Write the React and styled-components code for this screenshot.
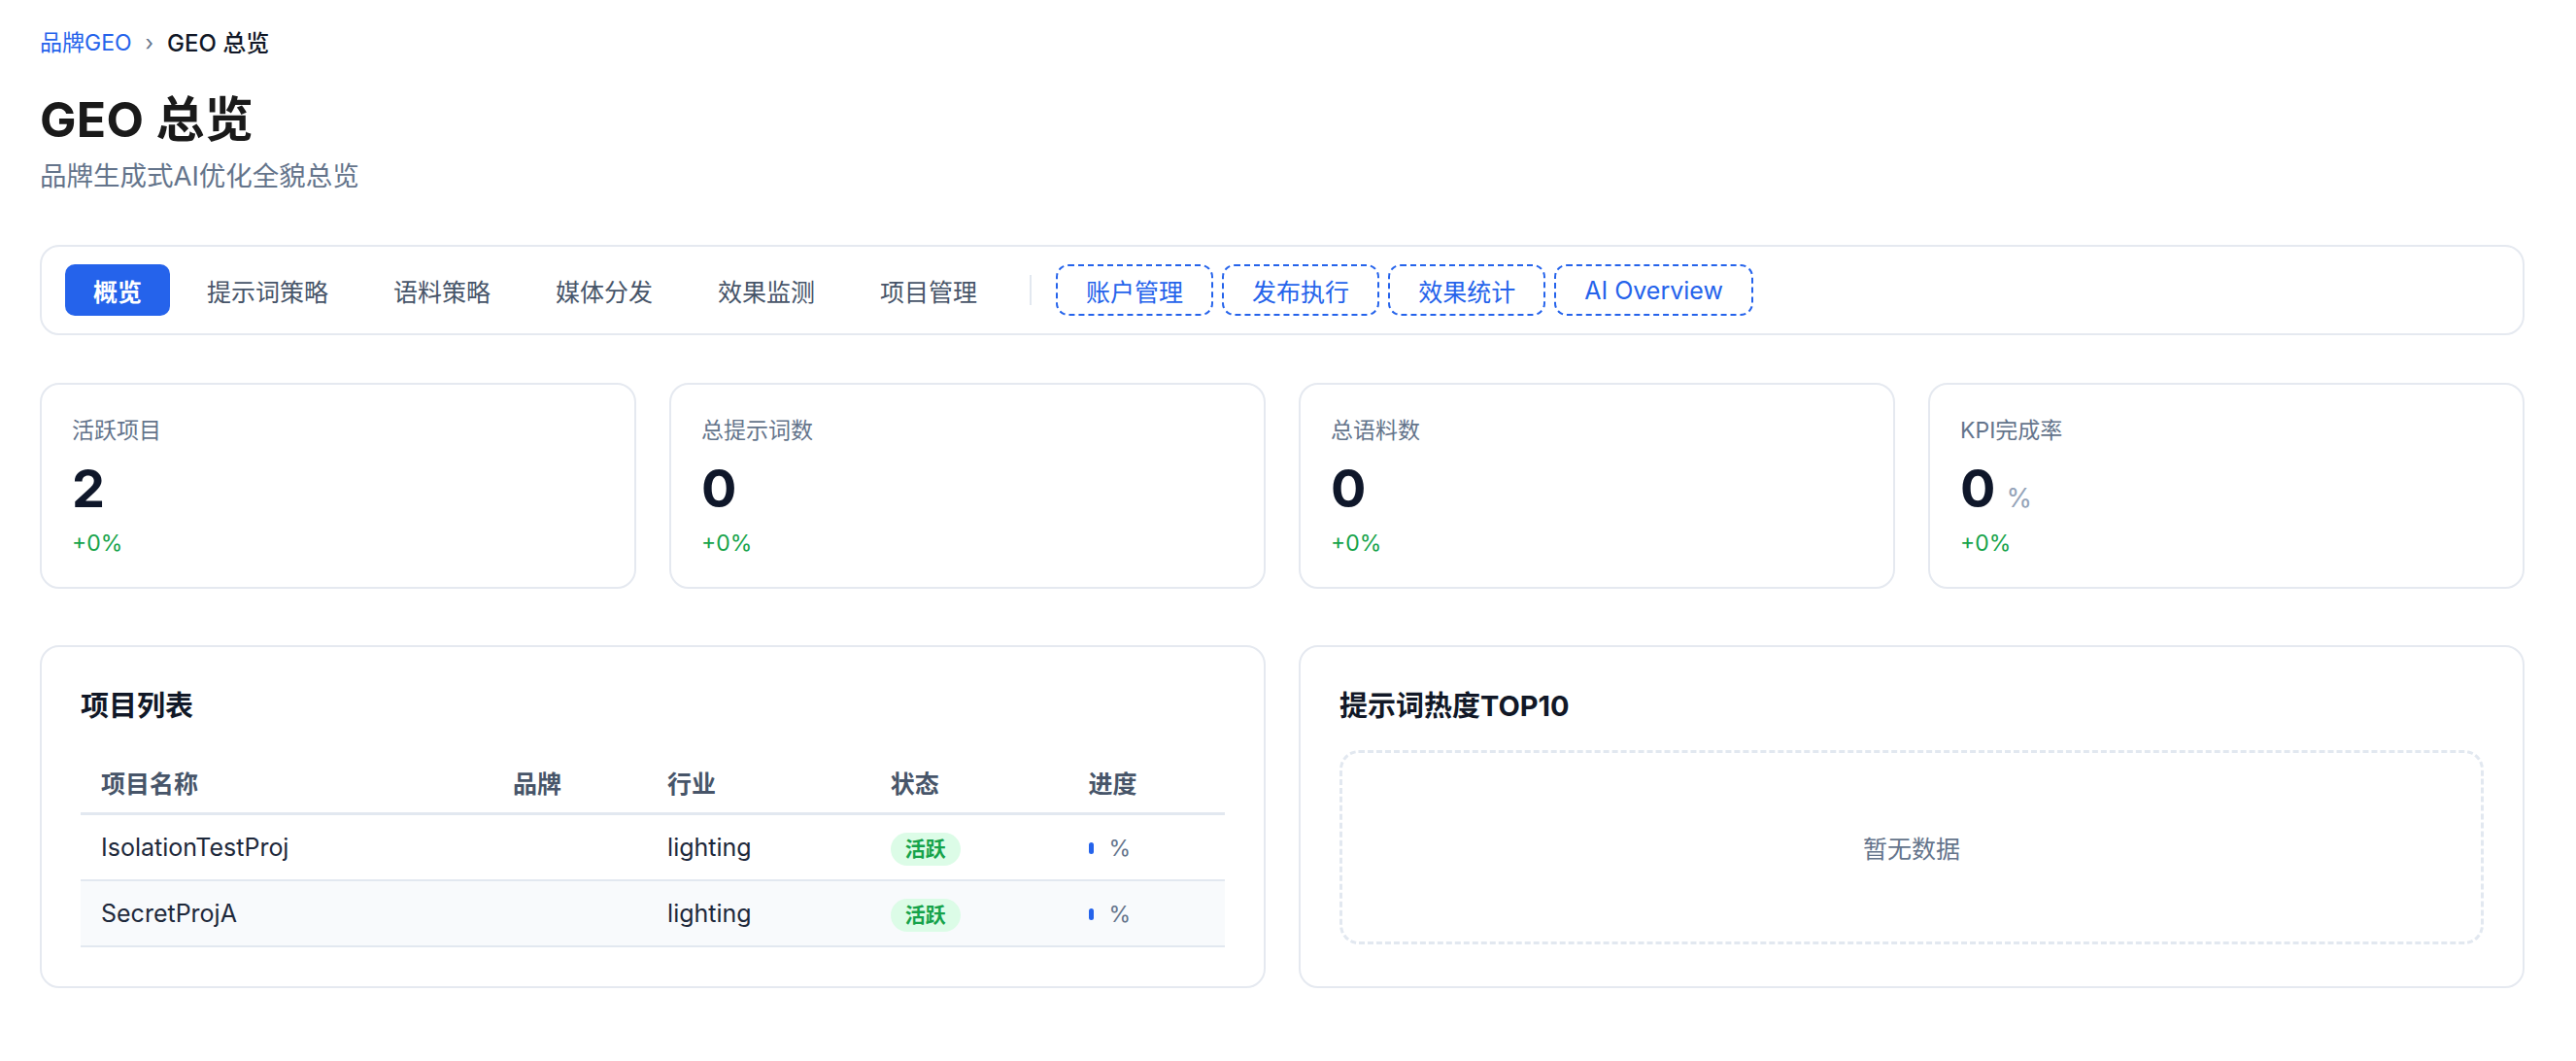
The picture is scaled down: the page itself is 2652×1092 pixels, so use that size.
import React from "react";
import styled, { createGlobalStyle } from "styled-components";

const GlobalStyle = createGlobalStyle`
  body {
    margin: 0;
    background: #ffffff;
    font-family: Inter, "Noto Sans CJK SC", sans-serif;
    color: #1e293b;
  }
`;

const Page = styled.div`
  padding: 27px 53px 60px 41px;
`;

const Breadcrumb = styled.div`
  display: flex;
  align-items: center;
  font-size: 23px;
  line-height: 35px;
`;

const Crumb = styled.span`
  color: ${(p) => (p.link ? "#2563eb" : "#111827")};
  font-weight: ${(p) => (p.link ? 400 : 500)};
  font-size: ${(p) => (p.link ? 23 : 24)}px;
`;

const CrumbSep = styled.span`
  color: #64748b;
  margin: 0 14px;
  font-size: 22px;
`;

const Title = styled.h1`
  margin: 30px 0 0;
  font-size: 50px;
  line-height: 62px;
  letter-spacing: 0.3px;
  font-weight: 700;
  color: #1a1a1a;
`;

const Subtitle = styled.p`
  margin: 7px 0 0;
  font-size: 27.5px;
  line-height: 40px;
  color: #64748b;
`;

const TabBar = styled.nav`
  margin-top: 51px;
  display: flex;
  align-items: center;
  gap: 9px;
  padding: 18px 24px;
  border: 2px solid #e5e9f0;
  border-radius: 20px;
`;

const Tab = styled.button`
  height: 53px;
  padding: 0 29px;
  box-sizing: border-box;
  border-radius: ${(p) => (p.dashed ? 13 : 10)}px;
  border: ${(p) => (p.dashed ? "2px dashed #2563eb" : "none")};
  background: ${(p) => (p.active ? "#2563eb" : "transparent")};
  color: ${(p) => (p.active ? "#ffffff" : p.dashed ? "#2563eb" : "#475569")};
  font-family: inherit;
  font-size: 25px;
  font-weight: ${(p) => (p.active ? 600 : 400)};
  cursor: pointer;
`;

const TabDivider = styled.span`
  width: 2px;
  height: 31px;
  background: #e2e8f0;
  margin: 0 16px;
`;

const StatGrid = styled.section`
  margin-top: 49px;
  display: grid;
  grid-template-columns: repeat(4, minmax(0, 1fr));
  gap: 34px;
`;

const Card = styled.div`
  border: 2px solid #e5e9f0;
  border-radius: 20px;
  background: #ffffff;
  box-sizing: border-box;
`;

const StatCard = styled(Card)`
  padding: 30px 31px 28px;
`;

const StatLabel = styled.div`
  font-size: 23px;
  line-height: 34px;
  color: #64748b;
`;

const StatValue = styled.div`
  margin-top: 10px;
  display: flex;
  align-items: baseline;
  gap: 11px;
  height: 65px;
  font-size: 54px;
  line-height: 65px;
  font-weight: 700;
  color: #0f172a;
`;

const StatUnit = styled.span`
  font-size: 27px;
  line-height: 1;
  font-weight: 400;
  color: #94a3b8;
`;

const StatDelta = styled.div`
  margin-top: 7px;
  font-size: 23px;
  line-height: 34px;
  color: #16a34a;
`;

const PanelGrid = styled.section`
  margin-top: 58px;
  display: grid;
  grid-template-columns: repeat(2, minmax(0, 1fr));
  gap: 34px;
`;

const Panel = styled(Card)`
  padding: 39px 40px 40px;
`;

const PanelTitle = styled.h2`
  margin: 0 0 24px;
  font-size: 29px;
  line-height: 43px;
  font-weight: 700;
  color: #111827;
`;

const Table = styled.table`
  width: 100%;
  border-collapse: collapse;
  table-layout: fixed;
  font-size: 25px;
`;

const Th = styled.th`
  text-align: left;
  padding: 17px 21px 11px;
  line-height: 36px;
  font-weight: 600;
  color: #475569;
  border-bottom: 3px solid #e2e8f0;
`;

const Row = styled.tr`
  background: ${(p) => (p.striped ? "#f8fafc" : "#ffffff")};
`;

const Td = styled.td`
  height: 66px;
  padding: 0 21px;
  vertical-align: middle;
  line-height: 36px;
  color: #1e293b;
  border-bottom: 2px solid #e2e8f0;
  white-space: nowrap;
`;

const Badge = styled.span`
  display: inline-flex;
  align-items: center;
  height: 34px;
  padding: 0 15px;
  border-radius: 17px;
  background: #dcfce7;
  color: #16a34a;
  font-size: 21px;
  font-weight: 600;
  vertical-align: middle;
`;

const Progress = styled.span`
  display: inline-flex;
  align-items: center;
  gap: 16px;
  color: #64748b;
  font-size: 23px;
  vertical-align: middle;
`;

const ProgressBar = styled.span`
  display: inline-block;
  width: 5px;
  height: 12px;
  border-radius: 3px;
  background: #2563eb;
`;

const Empty = styled.div`
  height: 200px;
  display: flex;
  align-items: center;
  justify-content: center;
  border: 3px dashed #e2e8f0;
  border-radius: 20px;
  box-sizing: border-box;
  color: #64748b;
  font-size: 25px;
`;

const tabs = ["概览", "提示词策略", "语料策略", "媒体分发", "效果监测", "项目管理"];
const extraTabs = ["账户管理", "发布执行", "效果统计", "AI Overview"];

const stats = [
  { label: "活跃项目", value: "2" },
  { label: "总提示词数", value: "0" },
  { label: "总语料数", value: "0" },
  { label: "KPI完成率", value: "0", unit: "%" },
];

const projects = [
  { name: "IsolationTestProj", brand: "", industry: "lighting", status: "活跃" },
  { name: "SecretProjA", brand: "", industry: "lighting", status: "活跃" },
];

const colWidths = ["36%", "13.5%", "19.5%", "17.3%", "13.7%"];

export default function App() {
  return (
    <Page>
      <GlobalStyle />
      <Breadcrumb>
        <Crumb link>品牌GEO</Crumb>
        <CrumbSep>›</CrumbSep>
        <Crumb>GEO 总览</Crumb>
      </Breadcrumb>
      <Title>GEO 总览</Title>
      <Subtitle>品牌生成式AI优化全貌总览</Subtitle>

      <TabBar>
        {tabs.map((t, i) => (
          <Tab key={t} active={i === 0}>
            {t}
          </Tab>
        ))}
        <TabDivider />
        {extraTabs.map((t) => (
          <Tab key={t} dashed>
            {t}
          </Tab>
        ))}
      </TabBar>

      <StatGrid>
        {stats.map((s) => (
          <StatCard key={s.label}>
            <StatLabel>{s.label}</StatLabel>
            <StatValue>
              {s.value}
              {s.unit && <StatUnit>{s.unit}</StatUnit>}
            </StatValue>
            <StatDelta>+0%</StatDelta>
          </StatCard>
        ))}
      </StatGrid>

      <PanelGrid>
        <Panel>
          <PanelTitle>项目列表</PanelTitle>
          <Table>
            <colgroup>
              {colWidths.map((w, i) => (
                <col key={i} style={{ width: w }} />
              ))}
            </colgroup>
            <thead>
              <tr>
                <Th>项目名称</Th>
                <Th>品牌</Th>
                <Th>行业</Th>
                <Th>状态</Th>
                <Th>进度</Th>
              </tr>
            </thead>
            <tbody>
              {projects.map((p, i) => (
                <Row key={p.name} striped={i % 2 === 1}>
                  <Td>{p.name}</Td>
                  <Td>{p.brand}</Td>
                  <Td>{p.industry}</Td>
                  <Td>
                    <Badge>{p.status}</Badge>
                  </Td>
                  <Td>
                    <Progress>
                      <ProgressBar />%
                    </Progress>
                  </Td>
                </Row>
              ))}
            </tbody>
          </Table>
        </Panel>
        <Panel>
          <PanelTitle>提示词热度TOP10</PanelTitle>
          <Empty>暂无数据</Empty>
        </Panel>
      </PanelGrid>
    </Page>
  );
}
